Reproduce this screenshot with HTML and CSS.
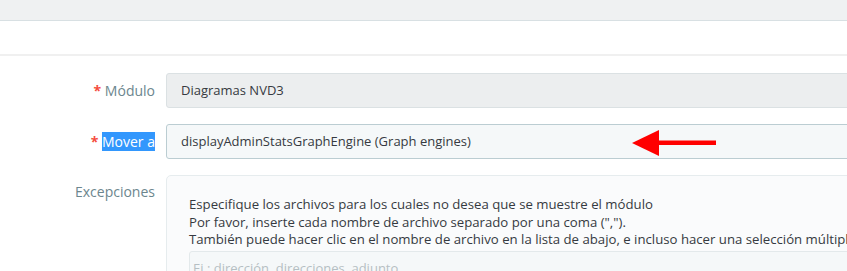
FILE: index.html
```html
<!DOCTYPE html>
<html lang="es">
<head>
    <meta charset="UTF-8" />
    <title>Posición del módulo</title>
    <link rel="stylesheet" href="styles.css">
</head>
<body>
<div class="topbar"></div>
<div class="toolbar"></div>

<form class="module-form">
    <div class="form-row">
        <label class="form-label"><span class="required">*</span> Módulo</label>
        <div class="form-field">
            <div class="form-input disabled">Diagramas NVD3</div>
        </div>
    </div>

    <div class="form-row">
        <label class="form-label"><span class="required">*</span> <span class="selected">Mover a</span></label>
        <div class="form-field">
            <div class="form-input">displayAdminStatsGraphEngine (Graph engines)</div>
            <svg class="pointer-arrow" width="86" height="30" viewBox="0 0 86 30">
                <polygon points="0,15 27,2 27,28" fill="#ff0000"/>
                <rect x="26" y="12.5" width="58" height="4.5" fill="#ff0000"/>
            </svg>
        </div>
    </div>

    <div class="form-row">
        <label class="form-label">Excepciones</label>
        <div class="form-field">
            <div class="exceptions-box">
                <p class="help-text">
                    Especifique los archivos para los cuales no desea que se muestre el módulo<br>
                    Por favor, inserte cada nombre de archivo separado por una coma (",").<br>
                    También puede hacer clic en el nombre de archivo en la lista de abajo, e incluso hacer una selección múltiple
                </p>
                <div class="text-input">Ej.: dirección, direcciones, adjunto</div>
            </div>
        </div>
    </div>
</form>
</body>
</html>
```

FILE: styles.css
```css
:root {
    --label: #6c868e;
    --text: #363a41;
    --border: #bbcdd2;
    --danger: #f54c3e;
}

body {
    font-family: 'Open Sans', 'Liberation Sans', sans-serif;
    margin: 0;
    padding: 0;
    background: #fff;
    color: var(--text);
    height: 271px;
    overflow: hidden;
}

.topbar {
    height: 20px;
    background: #eff1f2;
    border-bottom: 1px solid #d8e0e3;
}

.toolbar {
    height: 33px;
    border-bottom: 2px solid #f0f0f0;
}

.module-form {
    padding-top: 17px;
}

.form-row {
    display: grid;
    grid-template-columns: 155px 1fr;
    column-gap: 11px;
    margin-bottom: 16px;
}

.form-label {
    text-align: right;
    color: var(--label);
    font-size: 14px;
    line-height: 35px;
}

.required {
    color: var(--danger);
    font-weight: 700;
}

.selected {
    background: #3297fd;
    color: #fff;
}

.form-field {
    position: relative;
    min-width: 0;
}

.form-input {
    box-sizing: border-box;
    width: 720px;
    height: 35px;
    padding: 0 14px;
    border: 1px solid var(--border);
    border-radius: 3px;
    background: #f5f8f9;
    font-size: 13px;
    line-height: 33px;
    white-space: nowrap;
}

.form-input.disabled {
    background: #eceeef;
    border-color: #dbe1e3;
}

.pointer-arrow {
    position: absolute;
    left: 466px;
    top: 4px;
}

.form-row:last-child .form-label {
    line-height: 33px;
}

.exceptions-box {
    box-sizing: border-box;
    width: 720px;
    height: 120px;
    padding: 20px 0 0 22px;
    border: 1px solid #e6ecee;
    border-radius: 5px;
    background: #fafbfc;
}

.help-text {
    margin: 0 0 2px;
    font-size: 13.2px;
    line-height: 17.5px;
    white-space: nowrap;
}

.text-input {
    box-sizing: border-box;
    height: 35px;
    padding: 0 3px;
    border: 1px solid #e3e9eb;
    border-radius: 3px;
    background: #f5f8f9;
    color: #b5bfc3;
    font-size: 13px;
    line-height: 33px;
}
```
